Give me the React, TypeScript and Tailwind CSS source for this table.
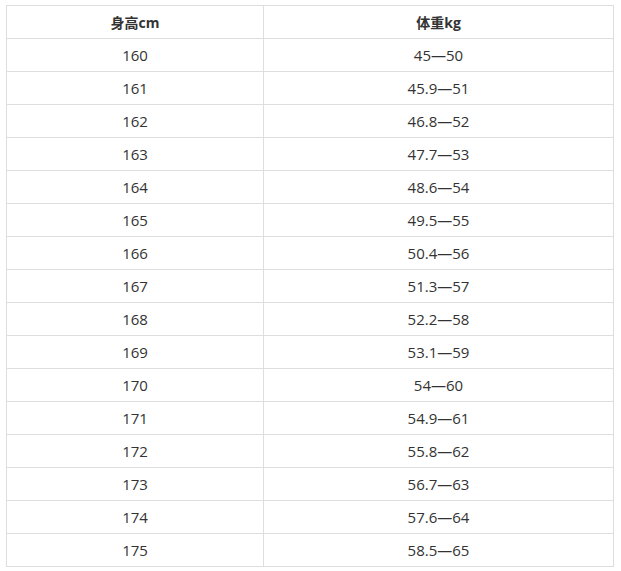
const rows: [string, string][] = [
  ["160", "45—50"],
  ["161", "45.9—51"],
  ["162", "46.8—52"],
  ["163", "47.7—53"],
  ["164", "48.6—54"],
  ["165", "49.5—55"],
  ["166", "50.4—56"],
  ["167", "51.3—57"],
  ["168", "52.2—58"],
  ["169", "53.1—59"],
  ["170", "54—60"],
  ["171", "54.9—61"],
  ["172", "55.8—62"],
  ["173", "56.7—63"],
  ["174", "57.6—64"],
  ["175", "58.5—65"],
];

export default function App() {
  return (
    <div className="min-h-[571px] bg-white pl-[6px] pt-[5px] font-['Open_Sans','Noto_Sans_CJK_SC',sans-serif] text-[15px] text-[#333]">
      <table className="w-[608px] border-collapse border border-[#dedede]">
        <thead>
          <tr>
            <th className="h-[33px] w-[257px] border border-[#dedede] p-0 text-center text-[14px] font-bold">
              身高cm
            </th>
            <th className="h-[33px] border border-[#dedede] p-0 text-center text-[14px] font-bold">
              体重kg
            </th>
          </tr>
        </thead>
        <tbody>
          {rows.map(([h, w]) => (
            <tr key={h}>
              <td className="h-[33px] border border-[#dedede] p-0 text-center">{h}</td>
              <td className="h-[33px] border border-[#dedede] p-0 text-center">{w}</td>
            </tr>
          ))}
        </tbody>
      </table>
    </div>
  );
}
